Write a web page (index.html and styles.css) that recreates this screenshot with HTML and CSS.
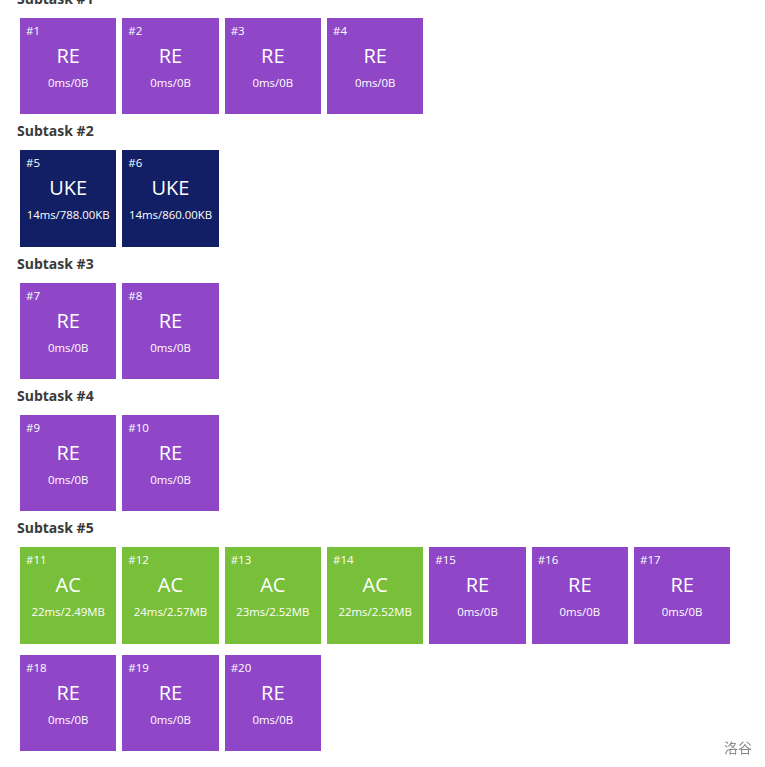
FILE: index.html
```html
<!DOCTYPE html>
<html lang="zh">
<head>
<meta charset="utf-8">
<title>Test cases</title>
<link rel="stylesheet" href="styles.css">
</head>
<body>
<main class="page">
  <section class="subtask">
    <h3 class="subtask-title">Subtask #1</h3>
    <div class="cases">
      <div class="case re"><div class="case-id">#1</div><div class="case-status">RE</div><div class="case-info">0ms/0B</div></div>
      <div class="case re"><div class="case-id">#2</div><div class="case-status">RE</div><div class="case-info">0ms/0B</div></div>
      <div class="case re"><div class="case-id">#3</div><div class="case-status">RE</div><div class="case-info">0ms/0B</div></div>
      <div class="case re"><div class="case-id">#4</div><div class="case-status">RE</div><div class="case-info">0ms/0B</div></div>
    </div>
  </section>
  <section class="subtask">
    <h3 class="subtask-title">Subtask #2</h3>
    <div class="cases">
      <div class="case uke"><div class="case-id">#5</div><div class="case-status">UKE</div><div class="case-info">14ms/788.00KB</div></div>
      <div class="case uke"><div class="case-id">#6</div><div class="case-status">UKE</div><div class="case-info">14ms/860.00KB</div></div>
    </div>
  </section>
  <section class="subtask">
    <h3 class="subtask-title">Subtask #3</h3>
    <div class="cases">
      <div class="case re"><div class="case-id">#7</div><div class="case-status">RE</div><div class="case-info">0ms/0B</div></div>
      <div class="case re"><div class="case-id">#8</div><div class="case-status">RE</div><div class="case-info">0ms/0B</div></div>
    </div>
  </section>
  <section class="subtask">
    <h3 class="subtask-title">Subtask #4</h3>
    <div class="cases">
      <div class="case re"><div class="case-id">#9</div><div class="case-status">RE</div><div class="case-info">0ms/0B</div></div>
      <div class="case re"><div class="case-id">#10</div><div class="case-status">RE</div><div class="case-info">0ms/0B</div></div>
    </div>
  </section>
  <section class="subtask">
    <h3 class="subtask-title">Subtask #5</h3>
    <div class="cases">
      <div class="case ac"><div class="case-id">#11</div><div class="case-status">AC</div><div class="case-info">22ms/2.49MB</div></div>
      <div class="case ac"><div class="case-id">#12</div><div class="case-status">AC</div><div class="case-info">24ms/2.57MB</div></div>
      <div class="case ac"><div class="case-id">#13</div><div class="case-status">AC</div><div class="case-info">23ms/2.52MB</div></div>
      <div class="case ac"><div class="case-id">#14</div><div class="case-status">AC</div><div class="case-info">22ms/2.52MB</div></div>
      <div class="case re"><div class="case-id">#15</div><div class="case-status">RE</div><div class="case-info">0ms/0B</div></div>
      <div class="case re"><div class="case-id">#16</div><div class="case-status">RE</div><div class="case-info">0ms/0B</div></div>
      <div class="case re"><div class="case-id">#17</div><div class="case-status">RE</div><div class="case-info">0ms/0B</div></div>
      <div class="case re"><div class="case-id">#18</div><div class="case-status">RE</div><div class="case-info">0ms/0B</div></div>
      <div class="case re"><div class="case-id">#19</div><div class="case-status">RE</div><div class="case-info">0ms/0B</div></div>
      <div class="case re"><div class="case-id">#20</div><div class="case-status">RE</div><div class="case-info">0ms/0B</div></div>
    </div>
  </section>
</main>
<div class="watermark">洛谷</div>
</body>
</html>
```

FILE: styles.css
```css
html, body {
  margin: 0;
  padding: 0;
  background: #ffffff;
}

body {
  font-family: "Open Sans", "Noto Sans", "Noto Sans CJK SC", sans-serif;
  color: #333333;
  overflow: hidden;
}

.page {
  margin-top: -11px;
  padding-left: 17px;
  padding-right: 17px;
}

.subtask-title {
  margin: 7px 0 9px 0;
  font-size: 14px;
  line-height: 20px;
  font-weight: 700;
  color: #3a3a3a;
}

.subtask:first-child .subtask-title {
  margin-top: 0;
}

.cases {
  display: flex;
  flex-wrap: wrap;
  gap: 11.33px 6px;
  padding-left: 3px;
}

.case {
  width: 96.33px;
  height: 96.33px;
  box-sizing: border-box;
  padding: 6px 6px 0 6px;
  color: #ffffff;
}

.case.re { background: #8f47c8; }
.case.uke { background: #121f64; }
.case.ac { background: #79c03a; }

.case-id {
  font-size: 11.5px;
  line-height: 14px;
  text-align: left;
}

.case-status {
  margin-top: 4px;
  font-size: 20px;
  line-height: 28px;
  text-align: center;
}

.case-info {
  margin-top: 5px;
  font-size: 11.4px;
  line-height: 16px;
  text-align: center;
  white-space: nowrap;
  margin-left: -6px;
  margin-right: -6px;
}

.watermark {
  position: fixed;
  right: 13px;
  bottom: 11px;
  font-family: "Noto Sans CJK SC", sans-serif;
  font-size: 14px;
  line-height: 18px;
  color: #8a8a8a;
}
```
